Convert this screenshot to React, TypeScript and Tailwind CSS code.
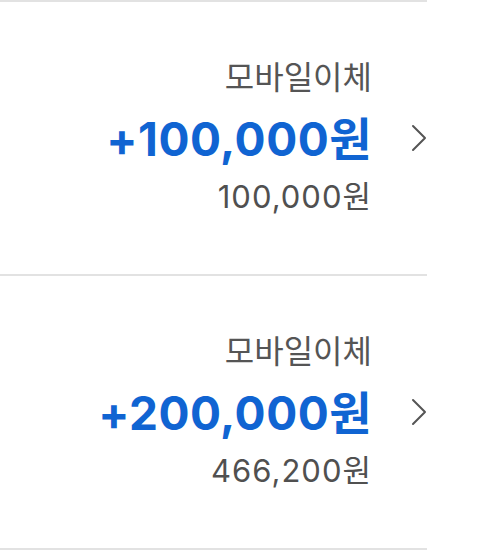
import React from "react";

const rows = [
  { label: "모바일이체", amount: "+100,000원", balance: "100,000원" },
  { label: "모바일이체", amount: "+200,000원", balance: "466,200원" },
];

function Chevron() {
  return (
    <svg width="16" height="28" viewBox="0 0 16 28" fill="none">
      <path d="M2 2 L14 14 L2 26" stroke="#555555" strokeWidth="2" strokeLinecap="round" strokeLinejoin="round" />
    </svg>
  );
}

export default function App() {
  return (
    <div
      className="w-[478px] h-[552px] bg-white"
      style={{ fontFamily: 'Inter, "Noto Sans CJK KR", sans-serif' }}
    >
      <div className="w-[427px] border-t-2 border-[#e2e2e2]">
        {rows.map((r, i) => (
          <div key={i} className="h-[274px] border-b-2 border-[#e2e2e2] flex items-center justify-end">
            <div className="flex flex-col items-end">
              <div className="mt-[-2px] text-[32px] leading-[40px] text-[#555555]">{r.label}</div>
              <div className="mt-[13px] text-[46px] leading-[56px] font-bold text-[#1064d2] tracking-[0.5px]">{r.amount}</div>
              <div className="mt-[10px] text-[31px] leading-[40px] text-[#505050] tracking-[1px]">{r.balance}</div>
            </div>
            <div className="ml-[39px] flex items-center">
              <Chevron />
            </div>
          </div>
        ))}
      </div>
    </div>
  );
}
